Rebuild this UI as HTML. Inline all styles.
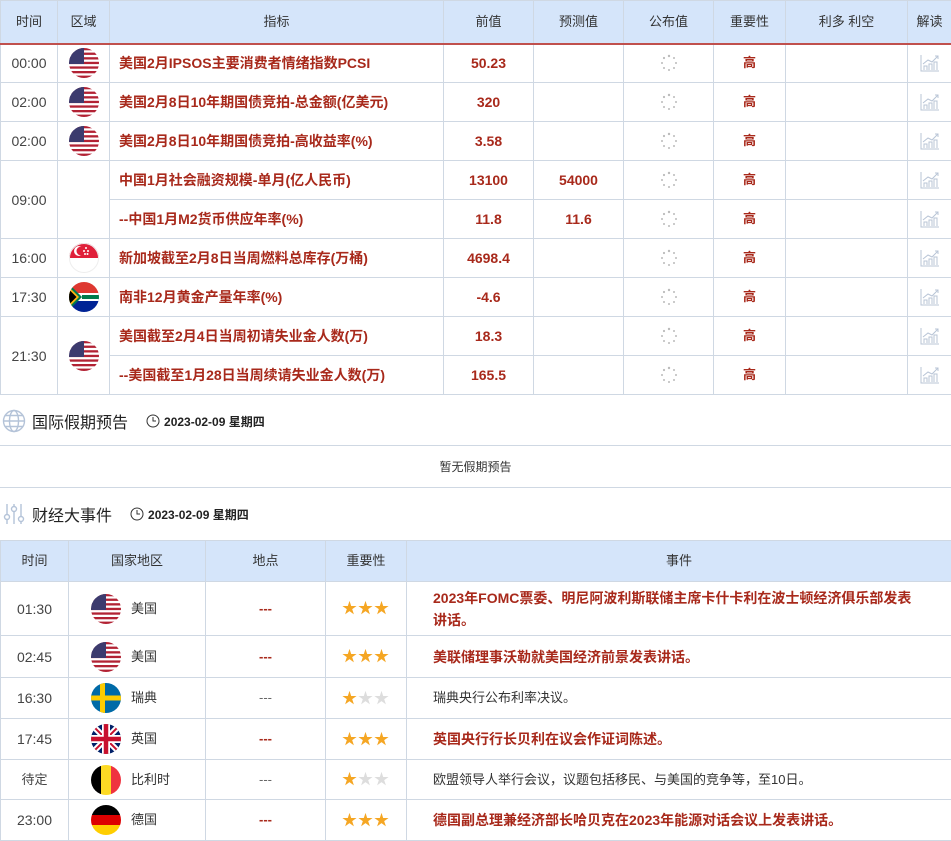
<!DOCTYPE html>
<html><head><meta charset="utf-8"><style>
*{box-sizing:border-box;margin:0;padding:0}
body{width:951px;height:840px;overflow:hidden;background:#fff;font-family:"Liberation Sans","Noto Sans CJK SC",sans-serif;font-size:13px;color:#333}
table{border-collapse:collapse;table-layout:fixed;position:absolute;left:0}
td,th{border:1px solid #cfd8e3;text-align:center;vertical-align:middle;padding:0;line-height:16px}
th{background:#d5e5fa;font-weight:normal;color:#333;font-size:13px}
.t1{top:0;width:951px}
.t1 th{height:43px;border-bottom:2px solid #c0504d}
.t1 td{height:39px}
.ind{text-align:left;padding-left:9px;color:#a8291b;font-weight:bold;font-size:14px}
.v{color:#a8291b;font-weight:bold;font-size:14px}
.hi{color:#a8291b;font-weight:bold}
.tm{color:#444;font-size:14px}
svg{display:inline-block;vertical-align:middle}
.sec{position:absolute;left:0;height:30px;display:flex;align-items:center}
.sec .title{font-size:16px;color:#222;margin-left:6px}
.sec .date{font-size:12px;color:#222;font-weight:bold;margin-left:18px;display:flex;align-items:center}
.box{position:absolute;left:0;width:951px;top:445px;height:43px;border-top:1px solid #cfd8e3;border-bottom:1px solid #cfd8e3;text-align:center;line-height:42px;font-size:12px;color:#333}
.t2{top:540px;width:951px}
.t2 th{height:41px}
.c{display:flex;align-items:center;justify-content:flex-start;padding-left:22px}
.c span{margin-left:10px}
.ev{text-align:left;padding:0 34px 0 26px;line-height:22px;font-size:13px}
.evr{color:#a8291b;font-weight:bold;font-size:14px}
.dash{color:#a8291b;font-weight:bold}
.star{color:#f5a623;font-size:15px;letter-spacing:1px;line-height:15px}
.gs{color:#ddd}
</style></head><body>
<svg width="0" height="0" style="position:absolute"><defs>
<clipPath id="cc"><circle cx="15" cy="15" r="15"/></clipPath>
<g id="us"><g clip-path="url(#cc)"><rect width="30" height="30" fill="#fff"/>
<rect y="0" width="30" height="2.3" fill="#b22234"/><rect y="4.6" width="30" height="2.3" fill="#b22234"/><rect y="9.2" width="30" height="2.3" fill="#b22234"/><rect y="13.8" width="30" height="2.3" fill="#b22234"/><rect y="18.4" width="30" height="2.3" fill="#b22234"/><rect y="23" width="30" height="2.3" fill="#b22234"/><rect y="27.6" width="30" height="2.4" fill="#b22234"/>
<rect width="15" height="16" fill="#3c3b6e"/></g></g>
<g id="chart"><path d="M2 2v16h18" stroke="#b8c4d6" fill="none"/><path d="M5 17v-4h3v4M10 17v-6h3v6M15 17v-8h3v8" stroke="#b8c4d6" fill="none"/><path d="M4 11l5-4 4 2 6-6M16 3h3v3" stroke="#b8c4d6" fill="none"/></g>
<g id="ld" fill="#bbb"><circle cx="10" cy="3" r="1.2"/><circle cx="15" cy="5" r="1"/><circle cx="17" cy="10" r="1"/><circle cx="15" cy="15" r="1"/><circle cx="10" cy="17" r="1"/><circle cx="5" cy="15" r="1"/><circle cx="3" cy="10" r="1"/><circle cx="5" cy="5" r="1.1"/></g>
</defs></svg>

<table class="t1">
<colgroup><col style="width:57px"><col style="width:52px"><col style="width:334px"><col style="width:90px"><col style="width:90px"><col style="width:90px"><col style="width:72px"><col style="width:122px"><col style="width:44px"></colgroup>
<tr><th>时间</th><th>区域</th><th>指标</th><th>前值</th><th>预测值</th><th>公布值</th><th>重要性</th><th>利多 利空</th><th>解读</th></tr>
<tr><td class="tm">00:00</td><td><svg width="30" height="30"><use href="#us"/></svg></td><td class="ind">美国2月IPSOS主要消费者情绪指数PCSI</td><td class="v">50.23</td><td></td><td><svg width="20" height="20"><use href="#ld"/></svg></td><td class="hi">高</td><td></td><td><svg width="22" height="20"><use href="#chart"/></svg></td></tr>
<tr><td class="tm">02:00</td><td><svg width="30" height="30"><use href="#us"/></svg></td><td class="ind">美国2月8日10年期国债竞拍-总金额(亿美元)</td><td class="v">320</td><td></td><td><svg width="20" height="20"><use href="#ld"/></svg></td><td class="hi">高</td><td></td><td><svg width="22" height="20"><use href="#chart"/></svg></td></tr>
<tr><td class="tm">02:00</td><td><svg width="30" height="30"><use href="#us"/></svg></td><td class="ind">美国2月8日10年期国债竞拍-高收益率(%)</td><td class="v">3.58</td><td></td><td><svg width="20" height="20"><use href="#ld"/></svg></td><td class="hi">高</td><td></td><td><svg width="22" height="20"><use href="#chart"/></svg></td></tr>
<tr><td class="tm" rowspan="2">09:00</td><td rowspan="2"></td><td class="ind">中国1月社会融资规模-单月(亿人民币)</td><td class="v">13100</td><td class="v">54000</td><td><svg width="20" height="20"><use href="#ld"/></svg></td><td class="hi">高</td><td></td><td><svg width="22" height="20"><use href="#chart"/></svg></td></tr>
<tr><td class="ind">--中国1月M2货币供应年率(%)</td><td class="v">11.8</td><td class="v">11.6</td><td><svg width="20" height="20"><use href="#ld"/></svg></td><td class="hi">高</td><td></td><td><svg width="22" height="20"><use href="#chart"/></svg></td></tr>
<tr><td class="tm">16:00</td><td><svg width="30" height="30"><g clip-path="url(#cc)"><rect width="30" height="30" fill="#fff"/><rect width="30" height="15" fill="#e0203a"/><circle cx="10" cy="8" r="5" fill="#fff"/><circle cx="12" cy="8" r="4.5" fill="#e0203a"/><circle cx="17" cy="5" r="1" fill="#fff"/><circle cx="19" cy="8" r="1" fill="#fff"/><circle cx="15" cy="8" r="1" fill="#fff"/><circle cx="16" cy="11" r="1" fill="#fff"/><circle cx="18.5" cy="11" r="1" fill="#fff"/></g><circle cx="15" cy="15" r="14.5" fill="none" stroke="#eee"/></svg></td><td class="ind">新加坡截至2月8日当周燃料总库存(万桶)</td><td class="v">4698.4</td><td></td><td><svg width="20" height="20"><use href="#ld"/></svg></td><td class="hi">高</td><td></td><td><svg width="22" height="20"><use href="#chart"/></svg></td></tr>
<tr><td class="tm">17:30</td><td><svg width="30" height="30"><g clip-path="url(#cc)"><rect width="30" height="15" fill="#de3831"/><rect y="15" width="30" height="15" fill="#002395"/><path d="M-2 2L11 15L-2 28ZM0 11h30v8H0z" fill="#fff"/><path d="M13 13h17v4H13z M0 2L13 15L0 28" fill="#007a4d"/><path d="M0 5L10 15L0 25Z" fill="#ffb612"/><path d="M0 7.5L7.5 15L0 22.5Z" fill="#000"/></g></svg></td><td class="ind">南非12月黄金产量年率(%)</td><td class="v">-4.6</td><td></td><td><svg width="20" height="20"><use href="#ld"/></svg></td><td class="hi">高</td><td></td><td><svg width="22" height="20"><use href="#chart"/></svg></td></tr>
<tr><td class="tm" rowspan="2">21:30</td><td rowspan="2"><svg width="30" height="30"><use href="#us"/></svg></td><td class="ind">美国截至2月4日当周初请失业金人数(万)</td><td class="v">18.3</td><td></td><td><svg width="20" height="20"><use href="#ld"/></svg></td><td class="hi">高</td><td></td><td><svg width="22" height="20"><use href="#chart"/></svg></td></tr>
<tr><td class="ind">--美国截至1月28日当周续请失业金人数(万)</td><td class="v">165.5</td><td></td><td><svg width="20" height="20"><use href="#ld"/></svg></td><td class="hi">高</td><td></td><td><svg width="22" height="20"><use href="#chart"/></svg></td></tr>
</table>

<div class="sec" style="top:406px"><svg width="24" height="24" style="margin-left:2px"><g fill="none" stroke="#b4c3d8" stroke-width="1.4"><circle cx="12" cy="12" r="10.5"/><ellipse cx="12" cy="12" rx="4.5" ry="10.5"/><path d="M1.5 12h21M3.5 6.5h17M3.5 17.5h17"/></g></svg><span class="title">国际假期预告</span><span class="date"><svg width="14" height="14" style="margin-right:4px"><circle cx="7" cy="7" r="6" fill="none" stroke="#333"/><path d="M7 3v4h3" fill="none" stroke="#333"/></svg>2023-02-09 星期四</span></div>
<div class="box">暂无假期预告</div>

<div class="sec" style="top:499px"><svg width="24" height="24" style="margin-left:2px"><g fill="none" stroke="#b4c3d8" stroke-width="1.4"><path d="M5 2v20M12 2v20M19 2v20"/><circle cx="5" cy="15" r="2.5" fill="#fff"/><circle cx="12" cy="7" r="2.5" fill="#fff"/><circle cx="19" cy="17" r="2.5" fill="#fff"/></g></svg><span class="title">财经大事件</span><span class="date"><svg width="14" height="14" style="margin-right:4px"><circle cx="7" cy="7" r="6" fill="none" stroke="#333"/><path d="M7 3v4h3" fill="none" stroke="#333"/></svg>2023-02-09 星期四</span></div>

<table class="t2">
<colgroup><col style="width:68px"><col style="width:137px"><col style="width:120px"><col style="width:81px"><col style="width:545px"></colgroup>
<tr><th>时间</th><th>国家地区</th><th>地点</th><th>重要性</th><th>事件</th></tr>
<tr style="height:54px"><td class="tm">01:30</td><td><div class="c"><svg width="30" height="30"><use href="#us"/></svg><span>美国</span></div></td><td class="dash">---</td><td class="star">★★★</td><td class="ev evr">2023年FOMC票委、明尼阿波利斯联储主席卡什卡利在波士顿经济俱乐部发表讲话。</td></tr>
<tr style="height:42px"><td class="tm">02:45</td><td><div class="c"><svg width="30" height="30"><use href="#us"/></svg><span>美国</span></div></td><td class="dash">---</td><td class="star">★★★</td><td class="ev evr">美联储理事沃勒就美国经济前景发表讲话。</td></tr>
<tr style="height:41px"><td class="tm">16:30</td><td><div class="c"><svg width="30" height="30"><g clip-path="url(#cc)"><rect width="30" height="30" fill="#006aa7"/><rect x="9" width="5" height="30" fill="#fecc00"/><rect y="12.5" width="30" height="5" fill="#fecc00"/></g></svg><span>瑞典</span></div></td><td style="color:#666">---</td><td class="star">★<span class="gs">★★</span></td><td class="ev">瑞典央行公布利率决议。</td></tr>
<tr style="height:41px"><td class="tm">17:45</td><td><div class="c"><svg width="30" height="30"><g clip-path="url(#cc)"><rect width="30" height="30" fill="#012169"/><path d="M0 0L30 30M30 0L0 30" stroke="#fff" stroke-width="6"/><path d="M0 0L30 30M30 0L0 30" stroke="#c8102e" stroke-width="2"/><path d="M15 0v30M0 15h30" stroke="#fff" stroke-width="8"/><path d="M15 0v30M0 15h30" stroke="#c8102e" stroke-width="4.5"/></g></svg><span>英国</span></div></td><td class="dash">---</td><td class="star">★★★</td><td class="ev evr">英国央行行长贝利在议会作证词陈述。</td></tr>
<tr style="height:40px"><td class="tm" style="font-size:13px">待定</td><td><div class="c"><svg width="30" height="30"><g clip-path="url(#cc)"><rect width="10" height="30" fill="#000"/><rect x="10" width="10" height="30" fill="#fdda24"/><rect x="20" width="10" height="30" fill="#ef3340"/></g></svg><span>比利时</span></div></td><td style="color:#666">---</td><td class="star">★<span class="gs">★★</span></td><td class="ev">欧盟领导人举行会议，议题包括移民、与美国的竞争等，至10日。</td></tr>
<tr style="height:41px"><td class="tm">23:00</td><td><div class="c"><svg width="30" height="30"><g clip-path="url(#cc)"><rect width="30" height="10" fill="#000"/><rect y="10" width="30" height="10" fill="#dd0000"/><rect y="20" width="30" height="10" fill="#ffce00"/></g></svg><span>德国</span></div></td><td class="dash">---</td><td class="star">★★★</td><td class="ev evr">德国副总理兼经济部长哈贝克在2023年能源对话会议上发表讲话。</td></tr>
</table>
</body></html>
